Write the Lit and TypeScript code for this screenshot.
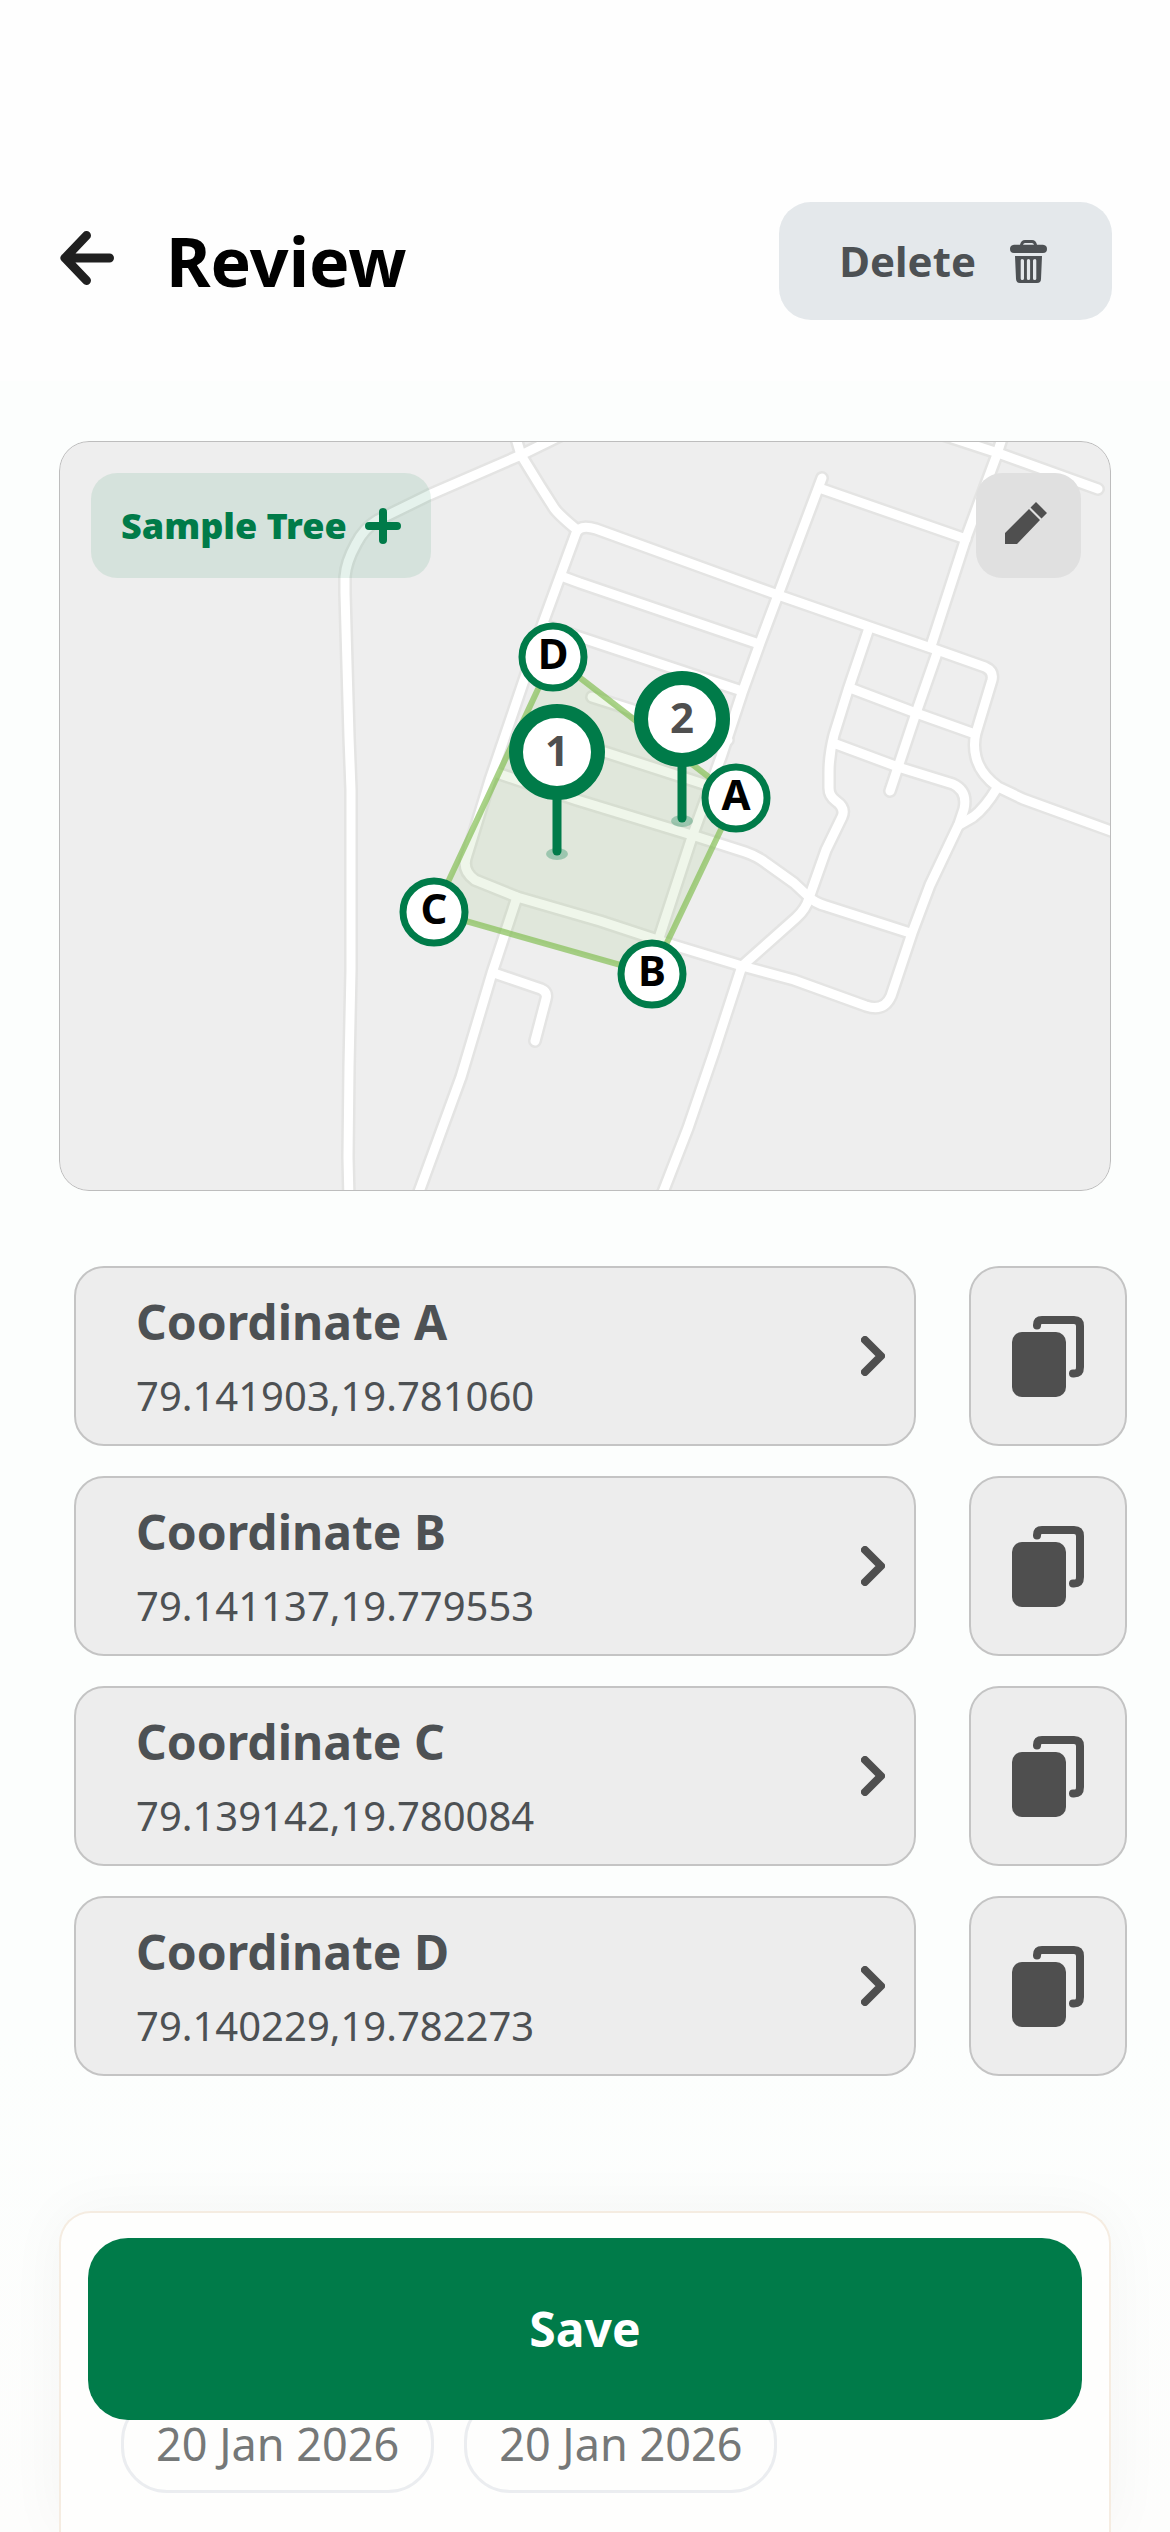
import { LitElement, html, svg, css } from "lit";
import { customElement, property } from "lit/decorators.js";

interface Coordinate {
  name: string;
  value: string;
}

interface Marker {
  label: string;
  x: number;
  y: number;
}

const COORDINATES: Coordinate[] = [
  { name: "A", value: "79.141903,19.781060" },
  { name: "B", value: "79.141137,19.779553" },
  { name: "C", value: "79.139142,19.780084" },
  { name: "D", value: "79.140229,19.782273" },
];

const CORNERS: Marker[] = [
  { label: "D", x: 553, y: 657 },
  { label: "A", x: 736, y: 798 },
  { label: "B", x: 652, y: 974 },
  { label: "C", x: 434, y: 912 },
];

const TREES: Marker[] = [
  { label: "1", x: 557, y: 752 },
  { label: "2", x: 682, y: 719 },
];

const ROADS: string[] = [
  "M574 429L521 455L429 495L378 520Q364 528 356 544Q346 562 345 577L345 593L349 737L351 790L351 970L349 1067L348 1157L349 1200",
  "M513 428L521 455L540 486L554 508Q558 514 576 529",
  "M778 595L596 529Q580 524 576 533L543 623L524 680L490 780L467 855Q461 870 475 880L517 897L600 921L673 945L742 966L794 980L866 1006Q884 1012 891 996L912 933L930 885L959 824L964 809Q968 791 953 784L898 767L836 744",
  "M778 595L873 628L934 649L985 667Q994 671 992 680L976 733Q973 745 976 757Q980 774 998 787L1023 799L1125 836",
  "M997 788Q985 808 973 817L959 825",
  "M561 576L580 583L759 644",
  "M543 625L742 691",
  "M592 697L728 740",
  "M586 746L713 787",
  "M494 772L577 800L695 836L745 852Q757 856 766 863L794 883L809 897Q815 903 826 906L910 933",
  "M822 478L778 595L760 643L742 693L721 757L692 837L659 938",
  "M1005 429L996 457L966 538L932 643M937 653L916 713L890 791",
  "M940 434L998 453L1098 489",
  "M822 489L966 539",
  "M869 628L848 690L834 735Q829 755 829 772L829 788Q829 796 836 801Q846 808 842 817L826 850L809 898Q806 909 796 918L742 966L714 1052L688 1128L660 1200",
  "M850 688L916 713L975 734",
  "M517 897L492 973L461 1077L416 1200",
  "M494 973L541 989Q548 992 546 999L535 1041",
];

const chevron = html`
  <svg class="chevron" viewBox="0 0 24 40" aria-hidden="true">
    <path d="M4 4L20 20L4 36" />
  </svg>
`;

const copyIcon = html`
  <svg class="copy-icon" viewBox="0 0 72 81" aria-hidden="true">
    <rect x="0" y="16" width="54" height="65" rx="10" />
    <path d="M25 9.500V9Q25 4 30 4H62Q68 4 68 10V51Q68 57.500 62 57.500H61" />
  </svg>
`;

@customElement("plot-map")
export class PlotMap extends LitElement {
  static styles = css`
    :host {
      display: block;
      position: relative;
      border-radius: 30px;
      overflow: hidden;
      background: #eeeeee;
    }
    :host::after {
      content: "";
      position: absolute;
      inset: 0;
      border: 1px solid #bdbdbd;
      border-radius: inherit;
      pointer-events: none;
    }
    .canvas {
      display: block;
      width: 100%;
      height: auto;
    }
    .casing,
    .road {
      fill: none;
      stroke-linecap: round;
      stroke-linejoin: round;
    }
    .casing {
      stroke: #e4e4e3;
      stroke-width: 14px;
    }
    .road {
      stroke: #ffffff;
      stroke-width: 9px;
    }
    .plot {
      fill: #80bc60;
      fill-opacity: 0.13;
      stroke: #84bf56;
      stroke-opacity: 0.7;
      stroke-width: 6px;
    }
    .corner {
      fill: #ffffff;
      stroke: #007b49;
      stroke-width: 7px;
    }
    .pin {
      fill: #ffffff;
      stroke: #007b49;
      stroke-width: 14px;
    }
    .stem {
      stroke: #007b49;
      stroke-width: 9px;
      stroke-linecap: round;
    }
    .ground {
      fill: #007b49;
      fill-opacity: 0.3;
    }
    .label {
      font: 700 42px "Noto Sans", "Open Sans", sans-serif;
      text-anchor: middle;
      fill: #000000;
    }
    .count {
      fill: #4f4f4f;
    }
    .toolbar {
      position: absolute;
      inset: 32px 30px auto 32px;
      display: flex;
      justify-content: space-between;
    }
    button {
      font: 900 36px/48px "Noto Sans", "Open Sans", sans-serif;
      border: 0;
      border-radius: 26px;
      height: 105px;
      display: flex;
      align-items: center;
      justify-content: center;
    }
    .add {
      padding: 0 30px;
      gap: 18px;
      background: rgba(0, 123, 73, 0.1);
      color: #007b49;
    }
    .plus {
      width: 36px;
      height: 36px;
      fill: none;
      stroke: currentColor;
      stroke-width: 8px;
      stroke-linecap: round;
    }
    .edit {
      box-sizing: border-box;
      width: 105px;
      padding: 0 5px 5px 0;
      background: #e0e0e0;
      color: #4f4f4f;
    }
    .pencil {
      width: 42px;
      height: 42px;
      fill: currentColor;
    }
  `;

  render() {
    return html`
      <svg class="canvas" viewBox="59 441 1052 750" role="img" aria-label="Plot map">
        ${ROADS.map((d) => svg`<path class="casing" d=${d} />`)}
        ${ROADS.map((d) => svg`<path class="road" d=${d} />`)}
        <polygon class="plot" points=${CORNERS.map((c) => `${c.x},${c.y}`).join(" ")} />
        ${CORNERS.map(
          (c) => svg`
            <circle class="corner" cx=${c.x} cy=${c.y} r="31" />
            <text class="label" x=${c.x} y=${c.y + 12}>${c.label}</text>
          `,
        )}
        ${TREES.map(
          (t) => svg`
            <ellipse class="ground" cx=${t.x} cy=${t.y + 102} rx="11" ry="6" />
            <line class="stem" x1=${t.x} y1=${t.y + 44} x2=${t.x} y2=${t.y + 99} />
            <circle class="pin" cx=${t.x} cy=${t.y} r="41" />
            <text class="label count" x=${t.x} y=${t.y + 14}>${t.label}</text>
          `,
        )}
      </svg>
      <div class="toolbar">
        <button class="add" type="button">
          Sample Tree
          <svg class="plus" viewBox="0 0 36 36" aria-hidden="true">
            <path d="M18 4V32M4 18H32" />
          </svg>
        </button>
        <button class="edit" type="button" aria-label="Edit plot">
          <svg class="pencil" viewBox="0 0 42 42" aria-hidden="true">
            <path d="M0 31L24 7L35 18L12 42H0ZM25.500 5.500L31 0L42 11L36.500 16.500Z" />
          </svg>
        </button>
      </div>
    `;
  }
}

@customElement("coordinate-row")
export class CoordinateRow extends LitElement {
  @property() name = "";
  @property() value = "";

  static styles = css`
    :host {
      display: flex;
      gap: 53px;
    }
    button {
      box-sizing: border-box;
      height: 180px;
      border: 2px solid #c4c4c4;
      border-radius: 30px;
      background: #ededed;
      display: flex;
      align-items: center;
      font-family: "Noto Sans", "Open Sans", sans-serif;
      color: #4d5154;
    }
    .entry {
      flex: 1;
      justify-content: space-between;
      padding: 0 29px 0 60px;
      text-align: left;
    }
    .text {
      display: flex;
      flex-direction: column;
      gap: 14px;
    }
    .title {
      font-size: 48px;
      line-height: 66px;
      font-weight: 700;
    }
    .value {
      font-size: 40px;
      line-height: 54px;
    }
    .chevron {
      width: 24px;
      height: 40px;
      fill: none;
      stroke: #4f4f4f;
      stroke-width: 8px;
      stroke-linecap: round;
      stroke-linejoin: round;
    }
    .copy {
      width: 158px;
      padding: 0;
      justify-content: center;
    }
    .copy-icon {
      width: 72px;
      height: 81px;
      fill: #4f4f4f;
    }
    .copy-icon path {
      fill: none;
      stroke: #4f4f4f;
      stroke-width: 8px;
      stroke-linecap: round;
    }
  `;

  render() {
    return html`
      <button class="entry" type="button">
        <span class="text">
          <span class="title">Coordinate ${this.name}</span>
          <span class="value">${this.value}</span>
        </span>
        ${chevron}
      </button>
      <button class="copy" type="button" aria-label="Copy coordinate ${this.name}">
        ${copyIcon}
      </button>
    `;
  }
}

@customElement("app-root")
export class AppRoot extends LitElement {
  static styles = css`
    :host {
      display: flex;
      flex-direction: column;
      min-height: 100vh;
      background: linear-gradient(#fcfefd 80%, #fdfdfc);
      font-family: "Noto Sans", "Open Sans", sans-serif;
    }
    button {
      border: 0;
      font-family: inherit;
      font-weight: 700;
    }
    .header {
      display: flex;
      align-items: center;
      gap: 52px;
      padding: 202px 58px 61px 60px;
      background: #fefefe;
    }
    .back {
      display: flex;
      padding: 0 0 6px;
      background: none;
    }
    .arrow {
      width: 54px;
      height: 54px;
      fill: none;
      stroke: #202020;
      stroke-width: 9px;
      stroke-linecap: round;
      stroke-linejoin: round;
    }
    .heading {
      flex: 1;
      margin: 0;
      font-size: 68px;
      line-height: 90px;
      font-weight: 700;
      color: #000000;
    }
    .delete {
      display: flex;
      align-items: center;
      gap: 28px;
      height: 118px;
      padding: 0 60px;
      border-radius: 32px;
      background: #e4e8eb;
      color: #4d5154;
      font-size: 42px;
      line-height: 58px;
    }
    .trash {
      width: 48px;
      height: 43px;
      fill: currentColor;
    }
    .map {
      margin: 60px 59px 0;
    }
    .list {
      display: flex;
      flex-direction: column;
      gap: 30px;
      padding: 75px 43px 0 74px;
    }
    .card {
      box-sizing: border-box;
      flex: 1;
      display: flex;
      align-items: flex-start;
      gap: 30px;
      margin: 135px 59px 0;
      padding: 182px 60px 39px;
      border: 2px solid #f5ece1;
      border-bottom: 0;
      border-radius: 32px 32px 0 0;
      background: #fefefd;
      box-shadow: 0 0 60px rgba(0, 0, 0, 0.04);
    }
    .chip {
      padding: 15px 32px;
      border: 3px solid #ebedf0;
      border-radius: 46px;
      background: none;
      color: #757878;
      font-size: 45px;
      line-height: 62px;
      font-weight: 400;
    }
    .save {
      position: fixed;
      inset: auto 88px 112px;
      height: 182px;
      border-radius: 40px;
      background: #007b49;
      color: #ffffff;
      font-size: 48px;
      line-height: 66px;
    }
  `;

  render() {
    return html`
      <header class="header">
        <button class="back" type="button" aria-label="Back">
          <svg class="arrow" viewBox="0 0 54 54" aria-hidden="true">
            <path d="M26.500 4.500L5 27L26.500 49.500M5 27H49.500" />
          </svg>
        </button>
        <h1 class="heading">Review</h1>
        <button class="delete" type="button">
          Delete
          <svg class="trash" viewBox="-6 0 48 43" aria-hidden="true">
            <path
              fill-rule="evenodd"
              d="M5 16H32L31 39Q31 43 27 43H10Q6 43 6 39ZM12 19Q10.700 19 10.700 20.500V38.500Q10.700 40 12.300 40T14 38.500V20.500Q14 19 12 19ZM18.500 19Q16.900 19 16.900 20.500V38.500Q16.900 40 18.500 40T20.100 38.500V20.500Q20.100 19 18.500 19ZM25 19Q23 19 23 20.500V38.500Q23 40 24.700 40T26.300 38.500V20.500Q26.300 19 25 19Z"
            />
            <path
              fill-rule="evenodd"
              d="M4 4.700H10Q11 0 15 0H22Q26 0 27 4.700H33Q37 5 37 9T33 13H4Q0 13 0 9T4 4.700ZM13 4.700H24Q23.500 3 22 3H15Q13.500 3 13 4.700Z"
            />
          </svg>
        </button>
      </header>
      <plot-map class="map"></plot-map>
      <section class="list" aria-label="Coordinates">
        ${COORDINATES.map(
          (c) => html`<coordinate-row .name=${c.name} .value=${c.value}></coordinate-row>`,
        )}
      </section>
      <section class="card" aria-label="Dates">
        <button class="chip" type="button">20 Jan 2026</button>
        <button class="chip" type="button">20 Jan 2026</button>
      </section>
      <button class="save" type="button">Save</button>
    `;
  }
}
